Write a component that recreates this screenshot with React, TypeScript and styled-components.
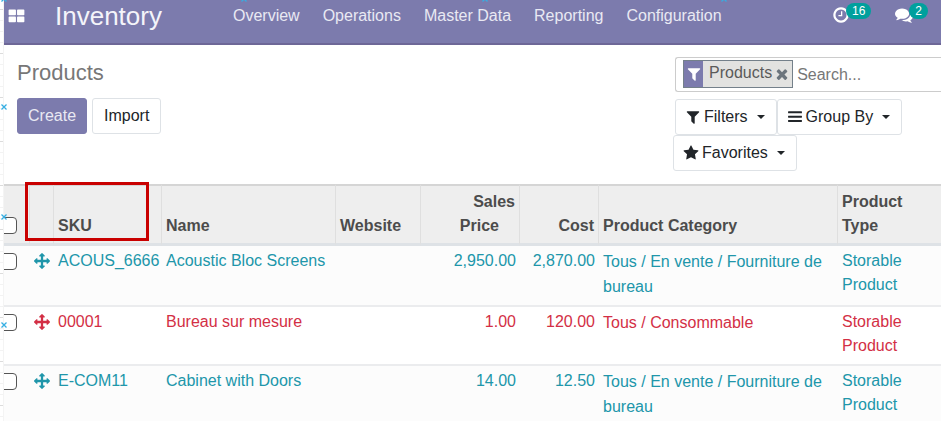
import React from "react";
import styled, { createGlobalStyle, css } from "styled-components";

const GlobalStyle = createGlobalStyle`
  * { box-sizing: border-box; }
  html, body, #root { height: 100%; }
  body {
    margin: 0;
    background: #fff;
    color: #4c4c4c;
    font: 16px/24px "Liberation Sans", Arial, sans-serif;
    overflow: hidden;
  }
  button, input { font: inherit; }
`;

const PATHS = {
  clock:
    "M1024 544v448q0 14-9 23t-23 9h-320q-14 0-23-9t-9-23v-64q0-14 9-23t23-9h224v-352q0-14 9-23t23-9h64q14 0 23 9t9 23zm416 352q0-148-73-273t-198-198-273-73-273 73-198 198-73 273 73 273 198 198 273 73 273-73 198-198 73-273zm224 0q0 209-103 385.5t-279.5 279.5-385.5 103-385.5-103-279.5-279.5-103-385.5 103-385.5 279.5-279.5 385.5-103 385.5 103 279.5 279.5 103 385.5z",
  comments:
    "M1408 768q0 139-94 257t-256.5 186.5-353.500 68.500q-86 0-176-16-124 88-278 128-36 9-86 16h-3q-11 0-20.500-8t-11.500-21q-1-3-1-6.500t.5-6.500 2-6l2.500-5 3.500-5.500 4-5 4.500-5 4-4.500q5-6 23-25t26-29.500 22.500-29 25-38.500 20.500-44q-124-72-195-177t-71-224q0-139 94-257t256.500-186.500 353.500-68.500 353.500 68.500 256.500 186.500 94 257zm384 256q0 120-71 224.500t-195 176.500q10 24 20.500 44t25 38.500 22.500 29 26 29.500 23 25q1 1 4 4.500t4.500 5 4 5 3.500 5.500l2.500 5 2 6 .5 6.500-1 6.500q-3 14-13 22t-22 7q-50-7-86-16-154-40-278-128-90 16-176 16-271 0-472-132 58 4 88 4 161 0 309-45t264-129q125-92 192-212t67-254q0-77-23-152 129 71 204 178t75 230z",
  filter:
    "M1595 295q17 41-14 70l-493 493v742q0 42-39 59-13 5-25 5-27 0-45-19l-256-256q-19-19-19-45v-486l-493-493q-31-29-14-70 17-39 59-39h1280q42 0 59 39z",
  times:
    "M1490 1322q0 40-28 68l-136 136q-28 28-68 28t-68-28l-294-294-294 294q-28 28-68 28t-68-28l-136-136q-28-28-28-68t28-68l294-294-294-294q-28-28-28-68t28-68l136-136q28-28 68-28t68 28l294 294 294-294q28-28 68-28t68 28l136 136q28 28 28 68t-28 68l-294 294 294 294q28 28 28 68z",
  star:
    "M1728 647q0 22-26 48l-363 354 86 500q1 7 1 20 0 21-10.500 35.500t-30.500 14.500q-19 0-40-12l-449-236-449 236q-22 12-40 12-21 0-31.500-14.500t-10.500-35.500q0-6 2-20l86-500-364-354q-25-27-25-48 0-37 56-46l502-73 225-455q19-41 49-41t49 41l225 455 502 73q56 9 56 46z",
  arrows:
    "M1792 896q0 26-19 45l-256 256q-19 19-45 19t-45-19-19-45v-128h-384v384h128q26 0 45 19t19 45-19 45l-256 256q-19 19-45 19t-45-19l-256-256q-19-19-19-45t19-45 45-19h128v-384h-384v128q0 26-19 45t-45 19-45-19l-256-256q-19-19-19-45t19-45l256-256q19-19 45-19t45 19 19 45v128h384v-384h-128q-26 0-45-19t-19-45 19-45l256-256q19-19 45-19t45 19l256 256q19 19 19 45t-19 45-45 19h-128v384h384v-128q0-26 19-45t45-19 45 19l256 256q19 19 19 45z",
  bars:
    "M160 264h1472q40 0 40 40v144q0 40-40 40h-1472q-40 0-40-40v-144q0-40 40-40zM160 744h1472q40 0 40 40v144q0 40-40 40h-1472q-40 0-40-40v-144q0-40 40-40zM160 1224h1472q40 0 40 40v144q0 40-40 40h-1472q-40 0-40-40v-144q0-40 40-40z",
  apps:
    "M140 240h570q80 0 80 80v430q0 80-80 80h-570q-80 0-80-80v-430q0-80 80-80zM980 240h570q80 0 80 80v430q0 80-80 80h-570q-80 0-80-80v-430q0-80 80-80zM140 940h570q80 0 80 80v430q0 80-80 80h-570q-80 0-80-80v-430q0-80 80-80zM980 940h570q80 0 80 80v430q0 80-80 80h-570q-80 0-80-80v-430q0-80 80-80z",
};

const Glyph = styled.svg`
  flex: none;
  fill: currentColor;
  vertical-align: -3px;
`;

const Icon = ({ name, size = 16 }: { name: keyof typeof PATHS; size?: number }) => (
  <Glyph width={size} height={size} viewBox="0 0 1792 1792" aria-hidden="true">
    <path d={PATHS[name]} />
  </Glyph>
);

const Sheet = styled.div`
  position: relative;
  display: flex;
  min-height: 100%;
`;

const Ruler = styled.div`
  flex: 0 0 4px;
  border-right: 1px solid #f4f4f4;
  background: repeating-linear-gradient(#fff 0 9px, #dcdcdc 9px 10px, #fff 10px 20px, #f3f3f3 20px 21px, #fff 21px 31px, #f3f3f3 31px 32px, #fff 32px 42px, #f3f3f3 42px 43px, #fff 43px 44px);
`;

const Handle = styled.svg<{ $x: number; $y: number }>`
  position: absolute;
  left: ${(p) => p.$x}px;
  top: ${(p) => p.$y}px;
  width: 6px;
  height: 6px;
  fill: none;
  stroke: #35aee2;
  stroke-width: 1.3;
`;

const Client = styled.div`
  flex: 1;
  min-width: 0;
  overflow: hidden;
`;

const Navbar = styled.header`
  display: flex;
  height: 45px;
  padding: 0 13px 11px 4px;
  align-items: center;
  background: #7c7bad;
  border-bottom: 2px solid #6d6797;
  color: #fff;
`;

const IconButton = styled.button`
  display: flex;
  padding: 0;
  border: 0;
  background: none;
  color: inherit;
`;

const Brand = styled.a`
  margin-left: 29px;
  color: #f4f4fa;
  font-size: 26px;
  line-height: 30px;
  text-decoration: none;
`;

const Menu = styled.nav`
  display: flex;
  gap: 23px;
  margin-left: 71px;
`;

const MenuLink = styled.a`
  color: #e9e9f3;
  text-decoration: none;
`;

const Systray = styled.div`
  display: flex;
  gap: 24px;
  margin-left: auto;
  padding-bottom: 4px;
`;

const TrayButton = styled(IconButton)`
  align-items: flex-start;
  height: 22px;
`;

const TrayIcon = styled.span`
  display: flex;
  padding-top: 3px;
`;

const Badge = styled.span`
  z-index: 1;
  margin-left: -4px;
  padding: 0 6px;
  border-radius: 8px;
  background: #00a09d;
  font-size: 12px;
  line-height: 16px;
`;

const ControlPanel = styled.section`
  display: flex;
  justify-content: space-between;
  min-height: 139px;
  padding: 12px 0 0 13px;
`;

const Title = styled.h1`
  margin: 0 0 9px;
  color: #777;
  font-size: 22px;
  font-weight: 400;
  line-height: 32px;
`;

const Actions = styled.div`
  display: flex;
  gap: 5px;
`;

const Button = styled.button<{ $primary?: boolean }>`
  display: flex;
  align-items: center;
  height: 36px;
  padding: 0 ${(p) => (p.$primary ? "10px" : "11px")};
  border: 1px solid ${(p) => (p.$primary ? "#7c7bad" : "#dee2e6")};
  border-radius: 3px;
  background: ${(p) => (p.$primary ? "#7c7bad" : "#fff")};
  color: ${(p) => (p.$primary ? "#e9e9f3" : "#212529")};
`;

const SearchPanel = styled.div`
  flex: 0 0 268px;
  min-width: 0;
`;

const SearchBox = styled.div`
  display: flex;
  height: 35px;
  margin-left: 2px;
  padding: 2px 0 3px 7px;
  border: 1px solid #ccc;
  border-right: 0;
  border-radius: 3px 0 0 3px;
`;

const Facet = styled.div`
  display: flex;
  flex: none;
  height: 28px;
  padding-right: 2px;
  border: 1px solid #74808a;
  background: #e2e2e0;
  color: #5a5a5a;
`;

const FacetIcon = styled.span`
  display: flex;
  align-items: center;
  justify-content: center;
  width: 19px;
  background: #7c7bad;
  color: #fff;
`;

const FacetLabel = styled.span`
  margin: 0 2px 0 6px;
`;

const RemoveFacet = styled(IconButton)`
  align-items: center;
  color: #6c757d;
`;

const SearchInput = styled.input`
  flex: 1;
  min-width: 0;
  height: 28px;
  padding: 2px 4px 0;
  border: 0;
  outline: 0;
  background: none;
  &::placeholder { color: #777; opacity: 1; }
`;

const Options = styled.div`
  display: flex;
  flex-wrap: wrap;
  margin-top: 7px;
`;

const OptionButton = styled(Button)<{ $first?: boolean }>`
  gap: 3px;
  padding: 0 11px 0 9px;
  margin-left: ${(p) => (p.$first ? "2px" : "0")};
  &::after {
    content: "";
    margin-left: 6px;
    border: 4px solid transparent;
    border-top-color: currentColor;
    border-bottom: 0;
  }
`;

const TableWrap = styled.div`
  position: relative;
`;

const Highlight = styled.div`
  position: absolute;
  top: -2px;
  left: 21px;
  width: 124px;
  height: 59px;
  border: 3px solid #c90000;
`;

const Table = styled.table`
  width: 100%;
  table-layout: fixed;
  border-collapse: separate;
  border-spacing: 0;
`;

const Col = styled.col<{ $w?: number }>`
  ${(p) => p.$w && css`width: ${p.$w}px;`}
`;

const Th = styled.th<{ $right?: boolean }>`
  height: 62px;
  padding: 4px 4px 5px;
  border-top: 2px solid #d5d5d5;
  border-bottom: 3px solid #dee2e6;
  border-right: 1px solid #dfdfdf;
  background: #eee;
  color: #4c4c4c;
  vertical-align: bottom;
  text-align: ${(p) => (p.$right ? "right" : "left")};
  &:last-child { border-right: 0; }
`;

const SortSpace = styled.span`
  padding-right: 16px;
`;

const Tr = styled.tr<{ $danger?: boolean }>`
  color: ${(p) => (p.$danger ? "#d32f45" : "#2096aa")};
  background: ${(p) => (p.$danger ? "#fff" : "#fcfcfc")};
`;

const Td = styled.td<{ $right?: boolean }>`
  padding: 3px 4px 6px;
  border-bottom: 2px solid #ebecee;
  vertical-align: top;
  text-align: ${(p) => (p.$right ? "right" : "left")};
`;

const CheckLabel = styled.label`
  display: flex;
  margin-left: -8px;
  padding: 4px 0;
`;

const Check = styled.input`
  appearance: none;
  flex: none;
  width: 17px;
  height: 17px;
  margin: 0;
  border: 1px solid #555;
  border-radius: 4px;
  background: #fff;
`;

const Category = styled.div`
  line-height: 25px;
`;

const rows = [
  { sku: "ACOUS_6666", name: "Acoustic Bloc Screens", price: "2,950.00", cost: "2,870.00", category: "Tous / En vente / Fourniture de bureau" },
  { sku: "00001", name: "Bureau sur mesure", price: "1.00", cost: "120.00", category: "Tous / Consommable", danger: true },
  { sku: "E-COM11", name: "Cabinet with Doors", price: "14.00", cost: "12.50", category: "Tous / En vente / Fourniture de bureau" },
];

const handles = [[1, 104], [1, 214], [1, 322], [1, -4], [241, -4], [482, -4], [721, -4]];

export default function App() {
  return (
    <Sheet>
      <GlobalStyle />
      <Ruler />
      <Client>
        <Navbar>
          <IconButton aria-label="Applications"><Icon name="apps" size={18} /></IconButton>
          <Brand href="#">Inventory</Brand>
          <Menu>
            {["Overview", "Operations", "Master Data", "Reporting", "Configuration"].map((m) => (
              <MenuLink href="#" key={m}>{m}</MenuLink>
            ))}
          </Menu>
          <Systray>
            <TrayButton aria-label="Activities"><TrayIcon><Icon name="clock" size={18} /></TrayIcon><Badge>16</Badge></TrayButton>
            <TrayButton aria-label="Conversations"><TrayIcon><Icon name="comments" size={18} /></TrayIcon><Badge>2</Badge></TrayButton>
          </Systray>
        </Navbar>
        <ControlPanel>
          <div>
            <Title>Products</Title>
            <Actions>
              <Button $primary>Create</Button>
              <Button>Import</Button>
            </Actions>
          </div>
          <SearchPanel>
            <SearchBox>
              <Facet>
                <FacetIcon><Icon name="filter" /></FacetIcon>
                <FacetLabel>Products</FacetLabel>
                <RemoveFacet aria-label="Remove"><Icon name="times" /></RemoveFacet>
              </Facet>
              <SearchInput aria-label="Search" placeholder="Search..." />
            </SearchBox>
            <Options>
              <OptionButton $first><Icon name="filter" />Filters</OptionButton>
              <OptionButton><Icon name="bars" />Group By</OptionButton>
              <OptionButton><Icon name="star" />Favorites</OptionButton>
            </Options>
          </SearchPanel>
        </ControlPanel>
        <TableWrap>
          <Table>
            <colgroup>
              <Col $w={26} /><Col $w={24} /><Col $w={108} /><Col $w={174} /><Col $w={85} />
              <Col $w={99} /><Col $w={79} /><Col $w={239} /><Col />
            </colgroup>
            <thead>
              <tr>
                <Th><CheckLabel><Check type="checkbox" aria-label="Select all" /></CheckLabel></Th>
                <Th />
                <Th>SKU</Th>
                <Th>Name</Th>
                <Th>Website</Th>
                <Th $right>Sales <SortSpace>Price</SortSpace></Th>
                <Th $right>Cost</Th>
                <Th>Product Category</Th>
                <Th>Product Type</Th>
              </tr>
            </thead>
            <tbody>
              {rows.map((r) => (
                <Tr key={r.sku} $danger={r.danger}>
                  <Td><CheckLabel><Check type="checkbox" aria-label={r.name} /></CheckLabel></Td>
                  <Td><Icon name="arrows" /></Td>
                  <Td>{r.sku}</Td>
                  <Td>{r.name}</Td>
                  <Td />
                  <Td $right>{r.price}</Td>
                  <Td $right>{r.cost}</Td>
                  <Td><Category>{r.category}</Category></Td>
                  <Td>Storable Product</Td>
                </Tr>
              ))}
            </tbody>
          </Table>
          <Highlight />
        </TableWrap>
      </Client>
      {handles.map(([x, y]) => (
        <Handle key={`${x}-${y}`} $x={x} $y={y} viewBox="0 0 6 6"><path d="M.5.5l5 5M5.500.5l-5 5" /></Handle>
      ))}
    </Sheet>
  );
}
